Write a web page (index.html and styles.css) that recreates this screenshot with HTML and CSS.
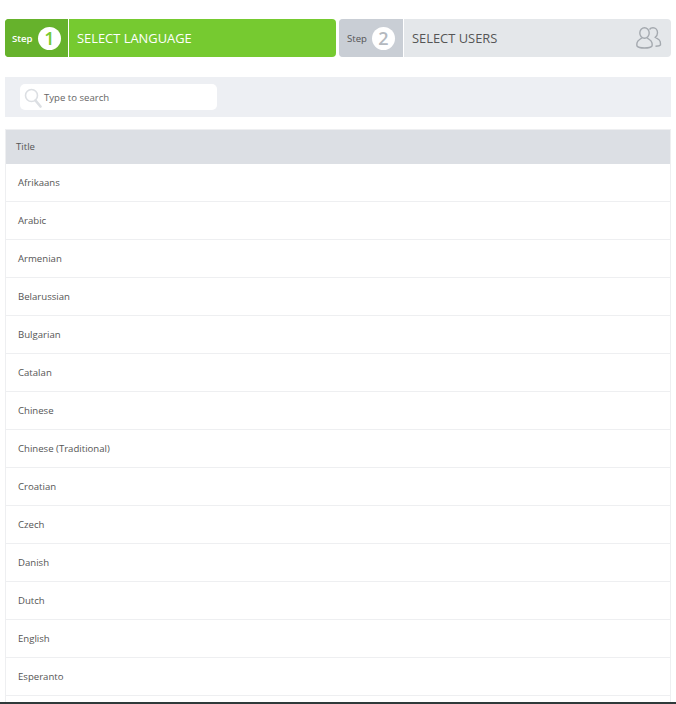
FILE: index.html
```html
<!DOCTYPE html>
<html lang="en">
<head>
<meta charset="utf-8">
<title>Select language</title>
<link rel="stylesheet" href="styles.css">
</head>
<body>
<main class="page">
  <div class="steps">
    <div class="step step-active">
      <div class="step-num"><span class="step-label">Step</span><span class="step-circle">1</span></div>
      <div class="step-title">SELECT LANGUAGE</div>
    </div>
    <div class="step step-idle">
      <div class="step-num"><span class="step-label">Step</span><span class="step-circle">2</span></div>
      <div class="step-title">SELECT USERS</div>
      <svg class="users-icon" width="26" height="22" viewBox="0 0 26 22" fill="none" stroke="#a4a9af" stroke-width="1.400">
        <path d="M13.500 2.500C14.300 1.300 15.500.8 17 .8c2.700 0 4.500 2.200 4.500 5 0 2-.8 3.600-2.300 4.500 1.200 1.300 4.300 1.500 5 4.300.3 1.200.3 2.600.3 3.200-.6.800-2.600 1.300-5 1.500"/>
        <ellipse cx="8.500" cy="6" rx="4.700" ry="5.200"/>
        <path d="M5.800 10.800C4.600 12.400 1.800 12.700 1.100 15.600.8 16.800.8 18.300 1 19c1 1.400 4 2 7.500 2s6.500-.6 7.500-2c.2-.7.2-2.200-.1-3.400-.7-2.900-3.500-3.200-4.700-4.800"/>
      </svg>
    </div>
  </div>
  <div class="search-bar">
    <label class="search-box">
      <svg class="search-icon" width="18" height="20" viewBox="0 0 18 20" fill="none" stroke="#dcdfe3">
        <circle cx="7.500" cy="7.500" r="6" stroke-width="1.600"/>
        <path d="M11.500 12.500l5 6" stroke-width="2.600" stroke-linecap="round"/>
      </svg>
      <span class="search-text">Type to search</span>
    </label>
  </div>
  <div class="table">
    <div class="table-head">Title</div>
    <div class="row">Afrikaans</div>
    <div class="row">Arabic</div>
    <div class="row">Armenian</div>
    <div class="row">Belarussian</div>
    <div class="row">Bulgarian</div>
    <div class="row">Catalan</div>
    <div class="row">Chinese</div>
    <div class="row">Chinese (Traditional)</div>
    <div class="row">Croatian</div>
    <div class="row">Czech</div>
    <div class="row">Danish</div>
    <div class="row">Dutch</div>
    <div class="row">English</div>
    <div class="row">Esperanto</div>
    <div class="row"></div>
  </div>
</main>
<div class="bottom-line"></div>
</body>
</html>
```
FILE: styles.css
```css
* { box-sizing: border-box; }
html, body { margin: 0; height: 704px; overflow: hidden; background: #fff; }
body { display: flex; flex-direction: column; font-family: "Open Sans", sans-serif; color: #555; }
.page { flex: 1; min-height: 0; overflow: hidden; padding: 19px 5px 0; }
.bottom-line { height: 2px; background: #2f3a3a; flex: none; }
.steps { display: flex; gap: 3px; height: 38px; }
.step { display: flex; align-items: center; border-radius: 4px; overflow: hidden; }
.step-num { display: flex; align-items: center; height: 100%; width: 64px; padding-left: 7px; border-right: 1px solid #fff; flex: none; }
.step-label { font-size: 9.600px; width: 26px; }
.step-circle { width: 23px; height: 23px; border-radius: 50%; background: #fff; display: flex; align-items: center; justify-content: center; font-size: 18px; font-weight: 600; }
.step-title { font-size: 12.900px; padding-left: 8px; flex: 1; }
.step-active { width: 331px; flex: none; background: #76ca30; color: #fff; }
.step-active .step-num { background: #66b22c; }
.step-active .step-label { font-weight: 600; }
.step-active .step-circle { color: #76ca30; }
.step-idle { flex: 1; background: #e4e7ea; color: #555; }
.step-idle .step-num { width: 65px; padding-left: 8px; background: #c9ced5; }
.step-idle .step-label { width: 25px; }
.step-idle .step-circle { color: #b4b9bf; }
.users-icon { margin-right: 9px; margin-bottom: 1px; flex: none; }
.search-bar { margin-top: 20px; height: 40px; background: #edeff3; padding: 7px 15px; }
.search-box { display: flex; align-items: center; width: 197px; height: 26px; background: #fff; border-radius: 5px; padding-left: 4px; }
.search-icon { flex: none; margin-top: 1px; }
.search-text { font-size: 9.600px; color: #666; margin-left: 2px; }
.table { margin-top: 12px; border: 1px solid #eeeff1; border-bottom: 0; }
.table-head { height: 34px; padding: 0 0 2px 10px; background: #dcdfe4; display: flex; align-items: center; font-size: 9.600px; color: #555; }
.row { height: 38px; border-bottom: 1px solid #eeeff1; display: flex; align-items: center; padding-left: 12px; font-size: 9.600px; color: #555; }
```
